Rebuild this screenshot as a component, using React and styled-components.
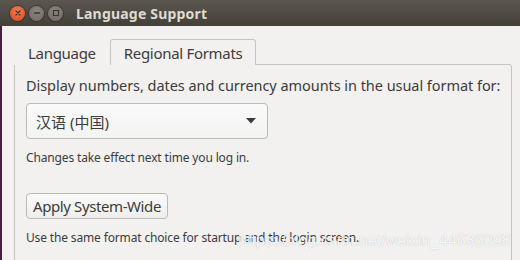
import React from 'react';
import styled, { createGlobalStyle } from 'styled-components';

const GlobalStyle = createGlobalStyle`
  body {
    margin: 0;
    background: #f2f1f0;
    font-family: 'Noto Sans', 'Noto Sans CJK SC', sans-serif;
  }
`;

const Window = styled.div`
  position: relative;
  width: 520px;
  height: 260px;
  overflow: hidden;
  background: #f2f1f0;
`;

const TitleBar = styled.div`
  height: 26px;
  display: flex;
  align-items: center;
  padding-left: 10px;
  gap: 4px;
  background: linear-gradient(#5b5750, #433f39);
`;

const WinButton = styled.span`
  width: 15px;
  height: 15px;
  border-radius: 50%;
  display: flex;
  align-items: center;
  justify-content: center;
  background: ${({ close }) =>
    close ? 'radial-gradient(circle at 50% 35%, #f27a52, #dd4a1c)' : 'radial-gradient(circle at 50% 35%, #8b877f, #6c6862)'};
  box-shadow: 0 0 0 1px rgba(0, 0, 0, 0.25);
`;

const Title = styled.span`
  margin-left: 9px;
  color: #dfdbd2;
  font-weight: bold;
  font-size: 14px;
  letter-spacing: 0.2px;
`;

const Body = styled.div`
  height: 234px;
  border-left: 2px solid #4b1d3c;
  padding: 12px 8px 0 12px;
  box-sizing: border-box;
`;

const Tabs = styled.div`
  display: flex;
  align-items: flex-end;
  height: 26px;
`;

const Tab = styled.div`
  height: 26px;
  box-sizing: border-box;
  padding: 0 13px;
  display: flex;
  align-items: center;
  font-size: 15px;
  letter-spacing: -0.3px;
  color: #3c3c3c;
  background: #f2f1f0;
  border: 1px solid ${({ active }) => (active ? '#c6c4c0' : 'transparent')};
  border-bottom: none;
  border-radius: 3px 3px 0 0;
  margin-bottom: -1px;
  position: relative;
  z-index: 1;
`;

const Frame = styled.div`
  border: 1px solid #c6c4c0;
  border-radius: 0 3px 0 0;
  height: 240px;
  padding: 10px 11px;
  box-sizing: border-box;
  color: #3c3c3c;
`;

const Lead = styled.div`
  font-size: 14.5px;
  letter-spacing: -0.05px;
  line-height: 20px;
  white-space: nowrap;
`;

const Combo = styled.div`
  margin-top: 8px;
  width: 242px;
  height: 36px;
  box-sizing: border-box;
  border: 1px solid #bdbab5;
  border-radius: 4px;
  background: linear-gradient(#fafafa, #f3f3f2);
  display: flex;
  align-items: center;
  justify-content: space-between;
  padding: 0 11px 0 9px;
  font-size: 15px;
`;

const Hint = styled.div`
  font-size: 12px;
  line-height: 16px;
  margin-top: ${({ gap }) => gap}px;
  letter-spacing: -0.15px;
  white-space: nowrap;
`;

const Button = styled.div`
  margin-top: 27px;
  display: inline-flex;
  align-items: center;
  height: 26px;
  box-sizing: border-box;
  padding: 0 6px;
  border: 1px solid #bdbab5;
  border-radius: 4px;
  background: linear-gradient(#fbfbfb, #efeeed);
  font-size: 15px;
  letter-spacing: -0.4px;
`;

const Watermark = styled.div`
  position: absolute;
  left: 238px;
  top: 232px;
  font-family: 'Liberation Sans', sans-serif;
  font-size: 16px;
  color: rgba(255, 255, 255, 0.9);
  text-shadow: 0 0 1px rgba(0, 0, 0, 0.25);
  white-space: nowrap;
`;

const Glyph = ({ d }) => (
  <svg width="8" height="8" viewBox="0 0 8 8">
    <path d={d} stroke="#3a3632" strokeWidth="1.3" fill="none" strokeLinecap="round" />
  </svg>
);

export default function App() {
  return (
    <Window>
      <GlobalStyle />
      <TitleBar>
        <WinButton close>
          <Glyph d="M2 2 L6 6 M6 2 L2 6" />
        </WinButton>
        <WinButton>
          <Glyph d="M1.5 4 H6.5" />
        </WinButton>
        <WinButton>
          <svg width="8" height="8" viewBox="0 0 8 8">
            <rect x="1.5" y="1.5" width="5" height="5" stroke="#3a3632" strokeWidth="1.2" fill="none" />
          </svg>
        </WinButton>
        <Title>Language Support</Title>
      </TitleBar>
      <Body>
        <Tabs>
          <Tab>Language</Tab>
          <Tab active>Regional Formats</Tab>
        </Tabs>
        <Frame>
          <Lead>Display numbers, dates and currency amounts in the usual format for:</Lead>
          <Combo>
            <span>汉语 (中国)</span>
            <svg width="10" height="6" viewBox="0 0 10 6">
              <path d="M0 0 H10 L5 5.5 Z" fill="#3c3c3c" />
            </svg>
          </Combo>
          <Hint gap={11}>Changes take effect next time you log in.</Hint>
          <Button>Apply System-Wide</Button>
          <Hint gap={11}>Use the same format choice for startup and the login screen.</Hint>
        </Frame>
      </Body>
      <Watermark>https://blog.csdn.net/weixin_44636098</Watermark>
    </Window>
  );
}
